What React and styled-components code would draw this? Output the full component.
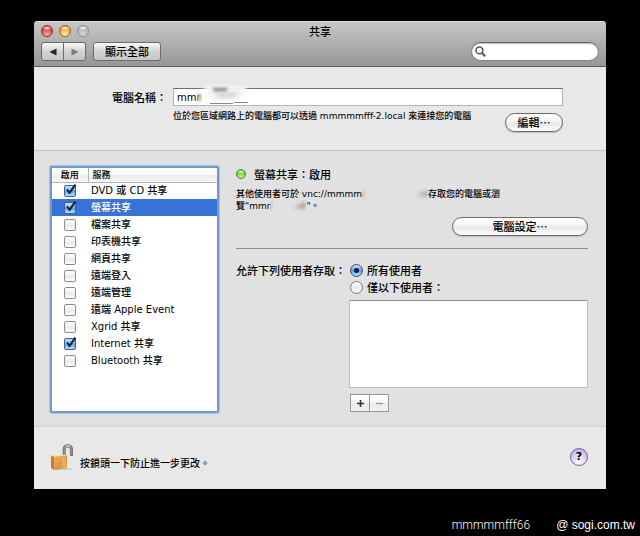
/**
 *
 * Sharing preferences
 *
 */

import React, { useState } from "react";
import styled, { createGlobalStyle, css } from "styled-components";

const GlobalStyle = createGlobalStyle`
  * {
    box-sizing: border-box;
  }

  body {
    margin: 0;
    background: #000;
    color: #000;
    font-family: "DejaVu Sans", "Noto Sans CJK TC", sans-serif;
    font-size: 10px;
    font-weight: 500;
  }

  button, input {
    font-family: inherit;
    font-weight: inherit;
    color: inherit;
  }
`;

const cjk = css`
  font-family: "Noto Sans CJK TC", sans-serif;
`;

const Page = styled.div`
  padding: 21px 34px 0;
`;

const Window = styled.main`
  overflow: hidden;
  border-radius: 4px 4px 0 0;
  background: #e8e8e8;
`;

/* Title bar */

const TitleBar = styled.header`
  padding: 0 7px 5px;
  background: linear-gradient(#c8c8c8, #969696);
  border-bottom: 1px solid #5a5a5a;
  box-shadow: inset 0 1px 0 #dedede;
`;

const TitleRow = styled.div`
  display: grid;
  grid-template-columns: 1fr auto 1fr;
  align-items: center;
  height: 21px;
  padding-bottom: 2px;
`;

const Title = styled.h1`
  ${cjk}
  margin: 0;
  font-size: 11px;
  font-weight: 500;
  line-height: 16px;
`;

const Lights = styled.div`
  display: flex;
  gap: 6px;
`;

const Light = styled.button`
  width: 12px;
  height: 12px;
  padding: 0;
  border: 1px solid ${(props) => props.$edge};
  border-radius: 50%;
  background: radial-gradient(ellipse 5px 2px at 50% 20%, #fff, transparent),
    radial-gradient(circle at 50% 90%, ${(props) => props.$glow}, ${(props) => props.$color} 75%);
`;

const Toolbar = styled.div`
  display: flex;
  align-items: center;
  gap: 7px;
`;

const NavGroup = styled.div`
  display: flex;
`;

const ToolButton = styled.button`
  ${cjk}
  display: flex;
  align-items: center;
  justify-content: center;
  min-width: 23px;
  height: 19px;
  padding: 0 11px 2px;
  border: 1px solid #6b6b6b;
  border-radius: 3px;
  background: linear-gradient(#fafafa, #d2d2d2 50%, #c6c6c6);
  font-size: 11px;
  line-height: 16px;
`;

const NavButton = styled(ToolButton)`
  padding: 0;

  &:first-child {
    border-radius: 3px 0 0 3px;
  }

  &:last-child {
    margin-left: -1px;
    border-radius: 0 3px 3px 0;
  }
`;

const Search = styled.label`
  display: flex;
  align-items: center;
  gap: 4px;
  width: 128px;
  height: 19px;
  margin-left: auto;
  padding: 0 8px 0 3px;
  border: 1px solid #858585;
  border-top-color: #666;
  border-radius: 10px;
  background: #fff;
  box-shadow: inset 0 1px 1px #bbb;

  svg {
    flex: none;
  }

  input {
    width: 100%;
    min-width: 0;
    padding: 0;
    border: 0;
    outline: 0;
    background: transparent;
    font-size: 11px;
  }
`;

/* Computer name */

const NameSection = styled.section`
  display: grid;
  grid-template-columns: 133px 1fr;
  column-gap: 6px;
  padding: 21px 43px 18px 0;
`;

const Label = styled.label`
  ${cjk}
  font-size: 11px;
  line-height: 18px;
  text-align: right;
  white-space: nowrap;
`;

const Field = styled.div`
  position: relative;
`;

const TextInput = styled.input`
  display: block;
  width: 100%;
  height: 18px;
  padding: 0 3px;
  border: 1px solid #b4b4b4;
  border-top-color: #6e6e6e;
  border-radius: 0;
  outline: 0;
  background: #fff;
  font-size: 10px;
`;

const FieldSmudge = styled.svg`
  position: absolute;
  left: 18px;
  top: -4px;
  pointer-events: none;
`;

const NameFooter = styled.div`
  display: flex;
  align-items: flex-start;
  justify-content: space-between;
`;

const Note = styled.p`
  margin: 0;
  font-size: 9px;
  line-height: 12px;
`;

const NameNote = styled(Note)`
  padding-top: 4px;
  white-space: nowrap;
`;

const PillButton = styled.button`
  ${cjk}
  width: ${(props) => (props.$wide ? "136px" : "58px")};
  height: 19px;
  padding: 0 0 1px;
  border: 1px solid #6a6a6a;
  border-radius: 10px;
  background: linear-gradient(#fff, #f4f4f4 45%, #e6e6e6 55%, #fff);
  box-shadow: 0 1px 1px #bdbdbd;
  font-size: 11px;
  line-height: 16px;
`;

const EditButton = styled(PillButton)`
  margin-top: 7px;
`;

/* Services */

const ServicesSection = styled.section`
  display: grid;
  grid-template-columns: 169px 1fr;
  column-gap: 17px;
  padding: 15px 18px 12px 16px;
  border-top: 1px solid #c4c4c4;
  border-bottom: 2px solid #d6d6d6;
  background: #e1e1e1;
`;

const ServiceList = styled.div`
  border: 2px solid #7399c6;
  border-radius: 2px;
  background: #fff;
  box-shadow: 0 0 1px 1px #a9c4e4;
`;

const ServiceTable = styled.table`
  width: 100%;
  border-collapse: collapse;
  table-layout: fixed;

  th {
    ${cjk}
    height: 14px;
    padding: 0 0 0 4px;
    border-bottom: 1px solid #b5b5b5;
    background: linear-gradient(#fff, #f8f8f8 50%, #ececec 50%, #f6f6f6);
    font-size: 9px;
    font-weight: 500;
    line-height: 12px;
    text-align: left;
  }

  th:first-child {
    width: 36px;
    padding: 0;
    border-right: 1px solid #b5b5b5;
    text-align: center;
  }
`;

const ServiceRow = styled.tr`
  height: 17px;
  background: ${(props) => (props.$selected ? "#3873d7" : "transparent")};
  color: ${(props) => (props.$selected ? "#fff" : "#000")};

  td {
    padding: 0 0 0 3px;
    line-height: 16px;
    white-space: nowrap;
  }

  td:first-child {
    padding: 0 0 0 12px;
  }
`;

const CheckWrap = styled.span`
  position: relative;
  display: block;
  width: 12px;
  height: 12px;

  input {
    display: block;
    width: 12px;
    height: 12px;
    margin: 0;
    appearance: none;
    border: 1px solid #8d8d8d;
    border-radius: 2px;
    background: linear-gradient(#fff, #efefef 50%, #e6e6e6 50%, #fff);
  }

  input:checked {
    border-color: #3f5f92;
    background: linear-gradient(#cfe2f8, #6fa9e8 50%, #5b9be4 50%, #b5e0fd);
  }

  svg {
    position: absolute;
    left: 1px;
    top: -1px;
    pointer-events: none;
  }
`;

const Detail = styled.div`
  display: flex;
  flex-direction: column;
  min-width: 0;
  padding-bottom: 1px;
`;

const Status = styled.h2`
  ${cjk}
  display: flex;
  align-items: center;
  gap: 8px;
  margin: 0 0 6px;
  font-size: 11px;
  font-weight: 500;
  line-height: 16px;
`;

const StatusDot = styled.span`
  width: 10px;
  height: 10px;
  border: 1px solid #4b8a2a;
  border-radius: 50%;
  background: radial-gradient(ellipse 4px 2px at 50% 20%, #f4ffe8, transparent),
    radial-gradient(circle at 50% 90%, #c9f77c, #59c42a 80%);
`;

const Smudge = styled.svg`
  vertical-align: top;
`;

const SettingsButton = styled(PillButton)`
  align-self: flex-end;
  margin-top: 5px;
`;

const Rule = styled.hr`
  width: 100%;
  margin: 12px 0 13px;
  border: 0;
  border-top: 1px solid #8f8f8f;
`;

const Access = styled.fieldset`
  display: grid;
  grid-template-columns: 109px 1fr;
  column-gap: 4px;
  margin: 0;
  padding: 0;
  border: 0;
`;

const AccessTitle = styled.div`
  ${cjk}
  font-size: 11px;
  line-height: 17px;
  white-space: nowrap;
`;

const RadioLabel = styled.label`
  ${cjk}
  display: flex;
  align-items: center;
  gap: 4px;
  padding-left: 1px;
  font-size: 11px;
  line-height: 17px;

  input {
    width: 13px;
    height: 13px;
    margin: 0;
    appearance: none;
    border: 1px solid #7b7b7b;
    border-radius: 50%;
    background: linear-gradient(#fff, #e9e9e9 50%, #fff);
  }

  input:checked {
    border-color: #2c4c86;
    background: radial-gradient(circle, #0b1a33 0 2px, transparent 3px),
      linear-gradient(#d4e6fa, #5c9de6 50%, #b6e3ff);
  }
`;

const UserList = styled.ul`
  height: 88px;
  margin: 4px 0 6px;
  padding: 0;
  border: 1px solid #bdbdbd;
  border-top-color: #8f8f8f;
  background: #fff;
`;

const SmallButtons = styled.div`
  display: flex;
  padding-left: 1px;
`;

const SmallButton = styled.button`
  display: flex;
  align-items: center;
  justify-content: center;
  width: 20px;
  height: 18px;
  padding: 0;
  border: 1px solid #989898;
  background: linear-gradient(#fff, #f6f6f6 50%, #ebebeb 50%, #f2f2f2);

  & + & {
    margin-left: -1px;
  }
`;

/* Bottom of the window */

const Footer = styled.footer`
  display: flex;
  align-items: center;
  justify-content: space-between;
  padding: 16px 18px 18px 16px;
`;

const LockButton = styled.button`
  display: flex;
  align-items: flex-end;
  gap: 5px;
  padding: 0;
  border: 0;
  background: none;
  font-size: 10px;
  line-height: 16px;

  span {
    ${cjk}
  }
`;

const HelpButton = styled.button`
  width: 18px;
  height: 18px;
  padding: 0;
  border: 1px solid #75689a;
  border-radius: 50%;
  background: radial-gradient(circle at 50% 80%, #fff, #d5c4f5 60%, #b09ad8);
  font-size: 11px;
  font-weight: 700;
  line-height: 14px;
`;

const Bleed = styled.div`
  margin-right: -34px;
`;

const Credits = styled.div`
  display: flex;
  justify-content: flex-end;
  gap: 26px;
  padding: 29px 5px 0 0;
  color: #fff;
  font-family: "Liberation Sans", sans-serif;
  font-size: 12px;
  line-height: 14px;
`;

const Author = styled.span`
  font-family: Roboto, sans-serif;
  font-weight: 300;
`;

const initialServices = [
  { name: "DVD 或 CD 共享", on: true },
  { name: "螢幕共享", on: true },
  { name: "檔案共享", on: false },
  { name: "印表機共享", on: false },
  { name: "網頁共享", on: false },
  { name: "遠端登入", on: false },
  { name: "遠端管理", on: false },
  { name: "遠端 Apple Event", on: false },
  { name: "Xgrid 共享", on: false },
  { name: "Internet 共享", on: true },
  { name: "Bluetooth 共享", on: false },
];

const Arrow = ({ flip, color }) => (
  <svg width="8" height="8" viewBox="0 0 8 8" aria-hidden="true">
    <path d={flip ? "M0.5 0.5 L7.5 4 L0.5 7.5Z" : "M7.5 0.5 L0.5 4 L7.5 7.5Z"} fill={color} />
  </svg>
);

const Magnifier = () => (
  <svg width="11" height="11" viewBox="0 0 11 11" fill="none" stroke="#555" aria-hidden="true">
    <circle cx="4.4" cy="4.4" r="3.4" strokeWidth="1.6" />
    <path d="M7 7 L10.2 10.2" strokeWidth="2" />
  </svg>
);

const Padlock = () => (
  <svg width="25" height="28" viewBox="0 0 25 28" aria-hidden="true">
    <defs>
      <linearGradient id="brass" x1="0" y1="0" x2="1" y2="1">
        <stop offset="0" stopColor="#eeb063" />
        <stop offset="0.6" stopColor="#de9440" />
        <stop offset="1" stopColor="#f3b865" />
      </linearGradient>
      <linearGradient id="steel" x1="0" x2="1">
        <stop offset="0" stopColor="#8a8a8a" />
        <stop offset="0.5" stopColor="#e2e2e2" />
        <stop offset="1" stopColor="#8a8a8a" />
      </linearGradient>
    </defs>
    <ellipse cx="14" cy="26" rx="9" ry="1.2" fill="#d2cec9" />
    <path d="M14.2 13 V6 C14.2 1.6 21.4 1.6 21.4 6 V13" fill="none" stroke="#6a6a6a" strokeWidth="3" />
    <path d="M14.2 13 V6 C14.2 1.6 21.4 1.6 21.4 6 V12.6" fill="none" stroke="url(#steel)" strokeWidth="1.6" />
    <path d="M1 13 L4 12.6 L17 12 V25 L4 27 L1 25Z" fill="#c47c34" />
    <path d="M4 13.4 L17 12.6 V25 L4 27Z" fill="url(#brass)" />
    <path d="M1 13 L4 12 L16 11.8 L17 12.8 L4 13.8Z" fill="#f9d9a0" />
    <path d="M12 14 L15.5 14 L15.5 23 L12 24Z" fill="#f6c680" opacity="0.5" />
  </svg>
);

const Haze = ({ id, width, tint }) => (
  <Smudge width={width} height="12" viewBox={`0 0 ${width} 12`} aria-hidden="true">
    <defs>
      <filter id={id} x="-100%" y="-100%" width="300%" height="300%">
        <feGaussianBlur stdDeviation="2" />
      </filter>
    </defs>
    <rect x="-2" y="3" width="3" height="6" fill="#b98d78" filter={`url(#${id})`} />
    <path d={`M${width - 12} 8 L${width} 2 L${width} 8Z`} fill={tint} filter={`url(#${id})`} />
  </Smudge>
);

const ServiceCheck = ({ id, checked, onChange }) => (
  <CheckWrap>
    <input type="checkbox" id={id} checked={checked} onChange={onChange} />
    {checked && (
      <svg width="12" height="12" viewBox="0 0 12 12" fill="none" aria-hidden="true">
        <path d="M2 5.5 L4.6 8.8 L10.4 0.6" stroke="#0d1c38" strokeWidth="2" />
      </svg>
    )}
  </CheckWrap>
);

const CreditsRow = () => (
  <Bleed>
    <Credits>
      <Author>mmmmmfff66</Author>
      <span>@ sogi.com.tw</span>
    </Credits>
  </Bleed>
);

const App = () => {
  const [services, setServices] = useState(initialServices);
  const [name, setName] = useState("mmm");
  const [access, setAccess] = useState("all");

  const toggle = (index) => {
    setServices(services.map((s, i) => (i === index ? { ...s, on: !s.on } : s)));
  };

  return (
    <Page lang="zh-TW">
      <GlobalStyle />
      <Window>
        <TitleBar>
          <TitleRow>
            <Lights>
              <Light aria-label="關閉" $edge="#8c2f31" $color="#d8333a" $glow="#ffb0a8" />
              <Light aria-label="縮到最小" $edge="#96622a" $color="#e99a35" $glow="#fff0a0" />
              <Light aria-label="縮放" $edge="#8e8e8e" $color="#b0b0b0" $glow="#d4d4d4" />
            </Lights>
            <Title>共享</Title>
          </TitleRow>
          <Toolbar>
            <NavGroup>
              <NavButton aria-label="上一頁">
                <Arrow color="#222" />
              </NavButton>
              <NavButton aria-label="下一頁">
                <Arrow flip color="#7d7d7d" />
              </NavButton>
            </NavGroup>
            <ToolButton>顯示全部</ToolButton>
            <Search>
              <Magnifier />
              <input type="text" aria-label="搜尋" />
            </Search>
          </Toolbar>
        </TitleBar>

        <NameSection>
          <Label htmlFor="computer-name">電腦名稱：</Label>
          <div>
            <Field>
              <TextInput id="computer-name" value={name} onChange={(e) => setName(e.target.value)} />
              <FieldSmudge width="62" height="24" viewBox="0 0 62 24" aria-hidden="true">
                <defs>
                  <filter id="soft" x="-30%" y="-50%" width="160%" height="200%">
                    <feGaussianBlur stdDeviation="1.5" />
                  </filter>
                </defs>
                <path d="M16 2 H55 V7 L50 14 L40 17 H12Z" fill="#f4f4f4" filter="url(#soft)" />
                <path d="M9 7 L16 3 L20 19 H7Z" fill="#fff" filter="url(#soft)" />
                <path d="M21 4 H37 L35 8 L24 8Z" fill="#8a8a8a" filter="url(#soft)" />
                <path d="M24 8 H48 L42 14 H28Z" fill="#dadada" filter="url(#soft)" />
                <path d="M7 10 H10 V17 H7Z" fill="#c99a78" filter="url(#soft)" />
                <path d="M19 19.5 H42 M43 18.5 H57" stroke="#888" strokeWidth="1" />
              </FieldSmudge>
            </Field>
            <NameFooter>
              <NameNote>位於您區域網路上的電腦都可以透過 mmmmmfff-2.local 來連接您的電腦</NameNote>
              <EditButton>編輯…</EditButton>
            </NameFooter>
          </div>
        </NameSection>

        <ServicesSection>
          <ServiceList>
            <ServiceTable>
              <thead>
                <tr>
                  <th>啟用</th>
                  <th>服務</th>
                </tr>
              </thead>
              <tbody>
                {services.map((service, index) => (
                  <ServiceRow key={service.name} $selected={index === 1}>
                    <td>
                      <ServiceCheck
                        id={`service-${index}`}
                        checked={service.on}
                        onChange={() => toggle(index)}
                      />
                    </td>
                    <td>
                      <label htmlFor={`service-${index}`}>{service.name}</label>
                    </td>
                  </ServiceRow>
                ))}
              </tbody>
            </ServiceTable>
          </ServiceList>

          <Detail>
            <Status>
              <StatusDot />
              螢幕共享：啟用
            </Status>
            <Note>
              其他使用者可於 vnc://mmmm
              <Haze id="haze-url" width={66} tint="#a99b94" />
              存取您的電腦或瀏
              <br />
              覽"mmr
              <Haze id="haze-name" width={36} tint="#a8837b" />
              "。
            </Note>
            <SettingsButton $wide>電腦設定…</SettingsButton>
            <Rule />
            <Access>
              <AccessTitle id="access-title">允許下列使用者存取：</AccessTitle>
              <div role="radiogroup" aria-labelledby="access-title">
                <RadioLabel>
                  <input
                    type="radio"
                    name="access"
                    checked={access === "all"}
                    onChange={() => setAccess("all")}
                  />
                  所有使用者
                </RadioLabel>
                <RadioLabel>
                  <input
                    type="radio"
                    name="access"
                    checked={access === "some"}
                    onChange={() => setAccess("some")}
                  />
                  僅以下使用者：
                </RadioLabel>
                <UserList aria-label="使用者" />
                <SmallButtons>
                  <SmallButton aria-label="加入">
                    <svg width="7" height="7" viewBox="0 0 7 7" aria-hidden="true">
                      <path d="M0 3.5 H7 M3.5 0 V7" stroke="#333" strokeWidth="1.6" />
                    </svg>
                  </SmallButton>
                  <SmallButton aria-label="移除">
                    <svg width="7" height="7" viewBox="0 0 7 7" aria-hidden="true">
                      <path d="M0 3.5 H7" stroke="#999" strokeWidth="1.4" />
                    </svg>
                  </SmallButton>
                </SmallButtons>
              </div>
            </Access>
          </Detail>
        </ServicesSection>

        <Footer>
          <LockButton>
            <Padlock />
            <span>按鎖頭一下防止進一步更改。</span>
          </LockButton>
          <HelpButton aria-label="輔助說明">?</HelpButton>
        </Footer>
      </Window>
      <CreditsRow />
    </Page>
  );
};

export default App;
